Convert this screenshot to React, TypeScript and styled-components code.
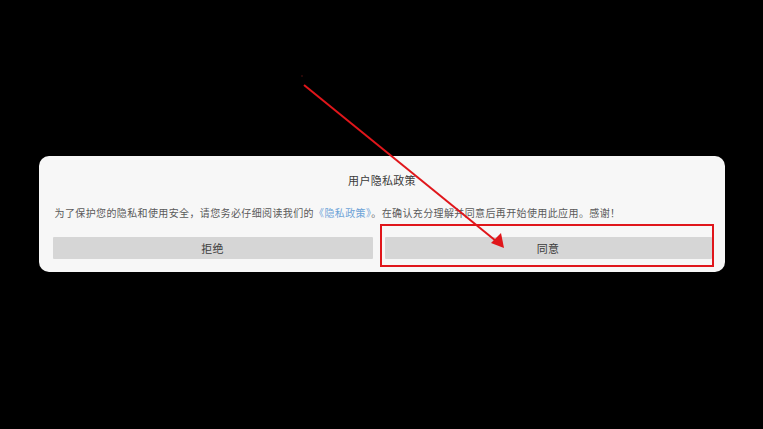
import React from "react";
import styled, { createGlobalStyle } from "styled-components";

const Global = createGlobalStyle`
  html, body { margin: 0; padding: 0; background: #000; }
  body { font-family: "Noto Sans CJK SC", "Noto Sans", sans-serif; }
`;

const Screen = styled.div`
  position: relative;
  width: 763px;
  height: 429px;
  background: #000;
  display: flex;
  align-items: center;
  justify-content: center;
  overflow: hidden;
`;

const Dialog = styled.div`
  box-sizing: border-box;
  width: 686px;
  height: 116px;
  margin-top: -1px;
  background: #f7f7f7;
  border-radius: 10px;
  padding: 17px 13px 13px 14px;
  display: flex;
  flex-direction: column;
`;

const Title = styled.div`
  font-size: 11px;
  line-height: 14px;
  height: 14px;
  color: #3a3a3a;
  text-align: center;
  letter-spacing: 0.3px;
`;

const Body = styled.div`
  margin: 19px 0 0 2px;
  font-size: 10px;
  line-height: 14px;
  height: 14px;
  letter-spacing: 0.38px;
  color: #5a5a5a;
  white-space: nowrap;
`;

const Link = styled.span`
  color: #6da3d8;
`;

const Actions = styled.div`
  margin-top: 17px;
  display: grid;
  grid-template-columns: 320px 1fr;
  gap: 12px;
`;

const ButtonWrap = styled.div`
  position: relative;
  height: 22px;
`;

const Button = styled.button`
  display: block;
  width: 100%;
  height: 22px;
  border: none;
  border-radius: 1px;
  background: #d6d6d6;
  color: #3c3c3c;
  font-family: "Noto Sans CJK SC", "Noto Sans", sans-serif;
  font-size: 11px;
  line-height: 22px;
  padding: 0;
  letter-spacing: 0.3px;
`;

const Highlight = styled.div`
  position: absolute;
  left: -5px;
  right: -2px;
  top: -13px;
  bottom: -8px;
  border: 2px solid #e0161b;
  pointer-events: none;
`;

const ArrowLayer = styled.svg`
  position: absolute;
  left: 0;
  top: 0;
  width: 763px;
  height: 429px;
  pointer-events: none;
`;

export default function App() {
  return (
    <>
      <Global />
      <Screen>
        <Dialog>
          <Title>用户隐私政策</Title>
          <Body>
            为了保护您的隐私和使用安全，请您务必仔细阅读我们的<Link>《隐私政策》</Link>。在确认充分理解并同意后再开始使用此应用。感谢！
          </Body>
          <Actions>
            <ButtonWrap>
              <Button>拒绝</Button>
            </ButtonWrap>
            <ButtonWrap>
              <Button>同意</Button>
              <Highlight />
            </ButtonWrap>
          </Actions>
        </Dialog>
        <ArrowLayer viewBox="0 0 763 429">
          <circle cx="302" cy="76" r="0.8" fill="#5a1010" />
          <line x1="304" y1="85" x2="496" y2="241" stroke="#e0161b" strokeWidth="2" />
          <polygon points="504,248 491,243 501,233" fill="#e0161b" />
        </ArrowLayer>
      </Screen>
    </>
  );
}
